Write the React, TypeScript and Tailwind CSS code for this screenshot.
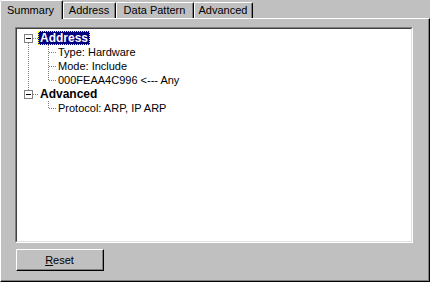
type TreeItem = { label: string; selected?: boolean; children: string[] };

const tree: TreeItem[] = [
  {
    label: "Address",
    selected: true,
    children: ["Type: Hardware", "Mode: Include", "000FEAA4C996 <--- Any"],
  },
  { label: "Advanced", children: ["Protocol: ARP, IP ARP"] },
];

const tabs = [
  { label: "Summary", w: "w-[63px]", active: true },
  { label: "Address", w: "w-[53px]" },
  { label: "Data Pattern", w: "w-[78px]" },
  { label: "Advanced", w: "w-[59px]" },
];

const dot = { stroke: "#808080", strokeDasharray: "1 1", shapeRendering: "crispEdges" as const };

function Tab({ label, w, active }: { label: string; w: string; active?: boolean }) {
  if (active) {
    return (
      <div className={`${w} h-[19px] -mb-px relative z-10 bg-[#c0c0c0] border-l border-t border-r border-l-white border-t-white border-r-black rounded-t-[2px]`}>
        <div className="h-full pl-[6px] pt-[2px] border-r border-[#808080] leading-[14px]">{label}</div>
      </div>
    );
  }
  return (
    <div className={`${w} h-[16px] border-l border-t border-r border-l-white border-t-white border-r-black rounded-t-[2px]`}>
      <div className="h-full flex justify-center border-r border-[#808080] leading-[15px]">{label}</div>
    </div>
  );
}

// connector for a top level node: expand box + lines to siblings
function RootGutter({ first, last }: { first: boolean; last: boolean }) {
  return (
    <svg width="20" height="14" className="shrink-0 block">
      {!first && <line x1="10.5" y1="0" x2="10.5" y2="3" {...dot} />}
      {!last && <line x1="10.5" y1="12" x2="10.5" y2="14" {...dot} />}
      <line x1="15" y1="7.5" x2="20" y2="7.5" {...dot} />
      <rect x="6.5" y="3.5" width="8" height="8" fill="#fff" stroke="#808080" shapeRendering="crispEdges" />
      <line x1="8" y1="7.5" x2="13" y2="7.5" stroke="#000" shapeRendering="crispEdges" />
    </svg>
  );
}

function ChildGutters({ parentLast, last }: { parentLast: boolean; last: boolean }) {
  return (
    <svg width="40" height="14" className="shrink-0 block">
      {!parentLast && <line x1="10.5" y1="0" x2="10.5" y2="14" {...dot} />}
      <line x1="30.5" y1="0" x2="30.5" y2={last ? 8 : 14} {...dot} />
      <line x1="31" y1="7.5" x2="39" y2="7.5" {...dot} />
    </svg>
  );
}

export default function App() {
  return (
    <div className="w-[430px] h-[282px] bg-[#c0c0c0] text-black text-[11px] font-['Liberation_Sans',Arial,sans-serif] overflow-hidden">
      {/* tab strip */}
      <div className="flex items-end h-[18px]">
        {tabs.map((t) => (
          <Tab key={t.label} {...t} />
        ))}
      </div>

      {/* tab page */}
      <div className="h-[264px] border-t border-l border-t-white border-l-white border-r border-b border-r-black border-b-black">
        <div className="h-full border-r border-b border-[#808080] pl-[14px] pt-[8px]">
          {/* tree view, sunken */}
          <div className="w-[398px] h-[216px] border-t border-l border-t-[#808080] border-l-[#808080] border-r border-b border-r-white border-b-white">
            <div className="h-full bg-white border-t border-l border-t-[#404040] border-l-[#404040] border-r border-b border-r-[#dfdfdf] border-b-[#dfdfdf] pt-[2px] pl-px">
              {tree.map((node, i) => {
                const last = i === tree.length - 1;
                return (
                  <div key={node.label}>
                    <div className="flex h-[14px]">
                      <RootGutter first={i === 0} last={last} />
                      <div
                        className={`h-[14px] px-px border border-dotted font-bold text-[12px] leading-[12px] ${
                          node.selected ? "bg-[#000080] text-white border-[#ffff00]" : "border-transparent"
                        }`}
                      >
                        {node.label}
                      </div>
                    </div>
                    {node.children.map((c, j) => (
                      <div key={c} className="flex h-[14px]">
                        <ChildGutters parentLast={last} last={j === node.children.length - 1} />
                        <span className="leading-[14px] whitespace-pre">{c}</span>
                      </div>
                    ))}
                  </div>
                );
              })}
            </div>
          </div>

          {/* reset button */}
          <button className="mt-[6px] ml-px w-[88px] h-[22px] border-t border-l border-t-white border-l-white border-r border-b border-r-black border-b-black bg-[#c0c0c0] p-0 block">
            <div className="h-full border-r border-b border-[#808080] flex items-center justify-center leading-[14px]">
              <span>
                <span className="underline">R</span>eset
              </span>
            </div>
          </button>
        </div>
      </div>
    </div>
  );
}
